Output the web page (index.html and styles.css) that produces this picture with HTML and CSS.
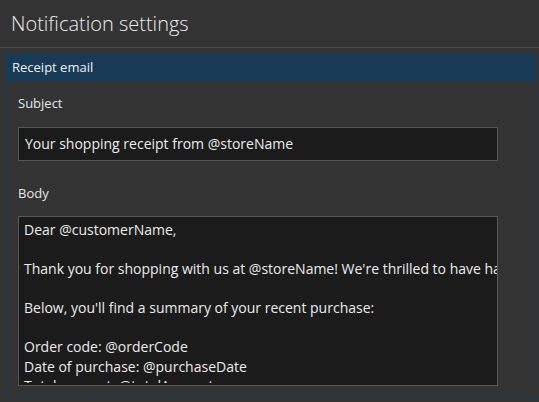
FILE: index.html
```html
<!DOCTYPE html>
<html>
<head>
<meta charset="utf-8">
<link rel="stylesheet" href="styles.css">
</head>
<body>
<h1 class="page-title">Notification settings</h1>
<section class="panel">
  <div class="panel-header">Receipt email</div>
  <div class="panel-body">
    <label class="field-label">Subject</label>
    <div class="input">Your shopping receipt from @storeName</div>
    <label class="field-label body-label">Body</label>
    <div class="textarea"><div class="ta-inner">Dear @customerName,

Thank you for shopping with us at @storeName! We're thrilled to have had you as our customer.

Below, you'll find a summary of your recent purchase:

Order code: @orderCode
Date of purchase: @purchaseDate
Total amount: @totalAmount</div></div>
  </div>
</section>
</body>
</html>
```
FILE: styles.css
```css
html, body {
  margin: 0;
  padding: 0;
  background: #333333;
  height: 100%;
  overflow: hidden;
}
body {
  font-family: "Open Sans", "Noto Sans", sans-serif;
  color: #ececec;
}
.page-title {
  margin: 0;
  height: 48px;
  box-sizing: border-box;
  padding: 11px 0 0 11px;
  font-size: 20px;
  font-weight: 300;
  line-height: 26px;
  border-bottom: 1px solid #4d4d4d;
}
.panel {
  margin: 5px 3px 0 5px;
  border: 1px solid #173a56;
  border-top: none;
  height: 346px;
  box-sizing: border-box;
}
.panel-header {
  background: #173a56;
  height: 28px;
  line-height: 28px;
  padding-left: 6px;
  font-size: 13px;
  font-weight: 500;
  color: #f0f0f0;
}
.panel-body {
  padding: 12px 37px 0 12px;
  display: flex;
  flex-direction: column;
}
.field-label {
  font-size: 13px;
  line-height: 20px;
  color: #e8e8e8;
}
.input {
  margin-top: 14px;
  height: 34px;
  box-sizing: border-box;
  border: 1px solid #575757;
  background: #1b1b1b;
  padding: 0 6px;
  font-size: 14px;
  line-height: 32px;
  white-space: nowrap;
  overflow: hidden;
}
.body-label {
  margin-top: 22px;
}
.textarea {
  margin-top: 13px;
  height: 170px;
  box-sizing: border-box;
  border: 1px solid #575757;
  background: #1b1b1b;
  overflow: hidden;
}
.ta-inner {
  height: 163px;
  overflow: hidden;
  padding: 3px 5px 0 5px;
  font-size: 14px;
  line-height: 19.5px;
  white-space: pre;
}
```
